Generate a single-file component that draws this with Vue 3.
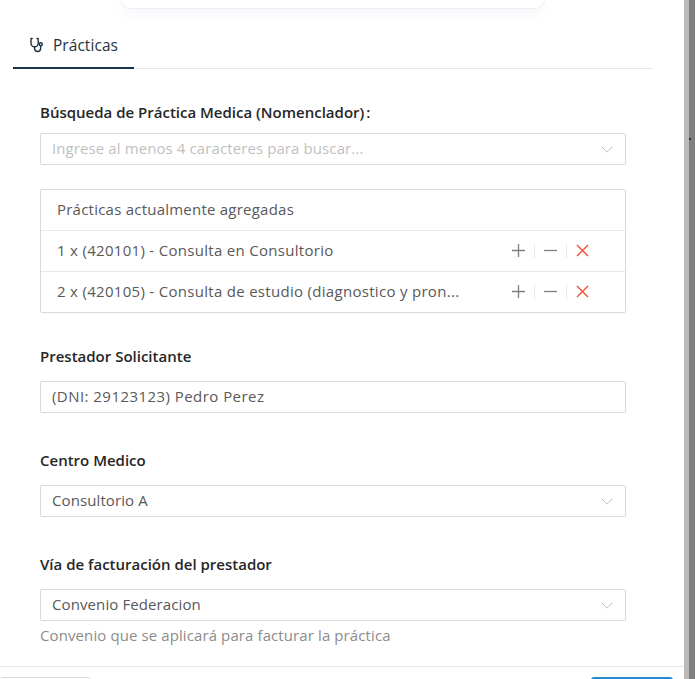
<template>
  <div class="screen">
    <div class="panel">
      <div class="scroll">
        <div class="top-card"></div>
        <div class="tabs">
          <div class="tab">
            <svg class="steth" viewBox="0 0 16 16" fill="none" stroke="#1c3345" stroke-width="1.4" stroke-linecap="round" stroke-linejoin="round">
              <path d="M3.2 1.5H2v4.7a3.6 3.6 0 0 0 7.2 0V1.5H8" />
              <path d="M5.6 9.8v1.7a3 3 0 0 0 6 0V9" />
              <circle cx="11.8" cy="7.2" r="1.5" />
            </svg>
            <span>Prácticas</span>
          </div>
        </div>
        <div class="form">
          <div class="field search">
            <label class="colon">Búsqueda de Práctica Medica (Nomenclador)<i>:</i></label>
            <div class="select placeholder">
              <span>Ingrese al menos 4 caracteres para buscar...</span>
              <svg class="chev" viewBox="0 0 12 7" fill="none" stroke="#bfbfbf" stroke-width="1"><path d="M.5.5 6 6.2 11.5.5" /></svg>
            </div>
          </div>

          <div class="list">
            <div class="list-head">Prácticas actualmente agregadas</div>
            <div class="list-row" v-for="item in items" :key="item.code">
              <span class="item-name">{{ item.text }}</span>
              <div class="actions">
                <svg class="act" viewBox="0 0 13 13" stroke="#7f7f7f" stroke-width="1.3"><path d="M6.5 0v13M0 6.5h13" /></svg>
                <i class="sep"></i>
                <svg class="act" viewBox="0 0 13 13" stroke="#7f7f7f" stroke-width="1.3"><path d="M0 6.5h13" /></svg>
                <i class="sep"></i>
                <svg class="act" viewBox="0 0 13 13" stroke="#f5563f" stroke-width="1.5"><path d="M1 1l11 11M12 1 1 12" /></svg>
              </div>
            </div>
          </div>

          <div class="field">
            <label>Prestador Solicitante</label>
            <div class="select"><span class="dni">(DNI: 29123123) Pedro Perez</span></div>
          </div>

          <div class="field">
            <label>Centro Medico</label>
            <div class="select">
              <span>Consultorio A</span>
              <svg class="chev" viewBox="0 0 12 7" fill="none" stroke="#bfbfbf" stroke-width="1"><path d="M.5.5 6 6.2 11.5.5" /></svg>
            </div>
          </div>

          <div class="field">
            <label>Vía de facturación del prestador</label>
            <div class="select">
              <span>Convenio Federacion</span>
              <svg class="chev" viewBox="0 0 12 7" fill="none" stroke="#bfbfbf" stroke-width="1"><path d="M.5.5 6 6.2 11.5.5" /></svg>
            </div>
            <div class="help">Convenio que se aplicará para facturar la práctica</div>
          </div>
        </div>
      </div>
      <div class="footer">
        <div class="btn-cancel"></div>
        <div class="btn-ok"></div>
      </div>
    </div>
    <div class="scrollbar"></div>
    <div class="backdrop"><i class="speck"></i></div>
  </div>
</template>

<script setup>
const items = [
  { code: "420101", text: "1 x (420101) - Consulta en Consultorio" },
  { code: "420105", text: "2 x (420105) - Consulta de estudio (diagnostico y pron..." },
]
</script>

<style>
html, body {
  margin: 0;
  background: #fff;
}
</style>

<style scoped>
.screen {
  display: flex;
  width: 695px;
  height: 679px;
  overflow: hidden;
  font-family: "Open Sans", "Lato", sans-serif;
  font-size: 15px;
  letter-spacing: 0.1px;
  color: #595959;
}

.panel {
  width: 684px;
  display: flex;
  flex-direction: column;
  background: #fff;
}

.scroll {
  flex: 1;
  min-height: 0;
  position: relative;
  overflow: hidden;
}

.top-card {
  width: 424px;
  height: 9px;
  margin-left: 121px;
  box-sizing: border-box;
  background: #fff;
  border: 1px solid #eef0f3;
  border-top: 0;
  border-radius: 0 0 10px 10px;
  box-shadow: 0 4px 12px rgba(30, 60, 110, 0.05);
}

.tabs {
  margin: 19px 31px 0 13px;
  height: 41px;
  box-sizing: border-box;
  border-bottom: 1px solid #e8e8e8;
}

.tab {
  width: 121px;
  height: 41px;
  box-sizing: border-box;
  border-bottom: 2px solid #1c3345;
  display: flex;
  align-items: center;
  justify-content: center;
  gap: 8px;
  padding-bottom: 5px;
  color: #1c3345;
  font-size: 15.4px;
}

.steth {
  width: 16px;
  height: 16px;
}

.form {
  padding: 33px 58px 0 40px;
}

.field {
  margin-bottom: 37px;
}

.field.search {
  margin-bottom: 24px;
}

label {
  display: block;
  height: 20px;
  line-height: 20px;
  margin-bottom: 15px;
  font-weight: 600;
  letter-spacing: 0;
  color: #262626;
}

.search label {
  margin-bottom: 11px;
}

.colon i {
  font-style: normal;
  margin-left: 2px;
}

.select {
  height: 32px;
  box-sizing: border-box;
  border: 1px solid #d9d9d9;
  border-radius: 2px;
  padding: 0 11px 2px;
  display: flex;
  align-items: center;
  justify-content: space-between;
}

.dni {
  letter-spacing: 0.45px;
}

.placeholder {
  color: #bfbfbf;
}

.chev {
  width: 12px;
  height: 7px;
  margin-right: 1px;
  margin-top: 2px;
}

.list {
  border: 1px solid #d9d9d9;
  border-radius: 2px;
  margin-bottom: 33px;
}

.list-head,
.list-row {
  box-sizing: border-box;
  padding: 0 16px 1px;
  display: flex;
  align-items: center;
}

.list-head {
  height: 40px;
  padding-bottom: 3px;
  letter-spacing: 0.23px;
}

.list-row {
  height: 41px;
  border-top: 1px solid #e8e8e8;
  justify-content: space-between;
}

.item-name {
  letter-spacing: 0.3px;
  margin-top: -2px;
}

.actions {
  display: flex;
  align-items: center;
  gap: 9px;
  margin-right: 20px;
}

.act {
  width: 13px;
  height: 13px;
}

.sep {
  width: 1px;
  height: 14px;
  background: #e8e8e8;
}

.help {
  margin-top: 3px;
  line-height: 22px;
  color: #8c8c8c;
}

.footer {
  height: 13px;
  flex: none;
  border-top: 1px solid #e8e8e8;
  box-sizing: border-box;
  display: flex;
  justify-content: space-between;
  padding: 10px 11px 0 0;
  overflow: hidden;
}

.btn-cancel {
  width: 91px;
  height: 32px;
  box-sizing: border-box;
  border: 1px solid #d9d9d9;
  border-radius: 3px;
}

.btn-ok {
  width: 82px;
  height: 32px;
  background: #2f86c9;
  border-radius: 3px;
}

.scrollbar {
  width: 5px;
  background: #b9b9b9;
}

.backdrop {
  flex: 1;
  background: #808080;
  position: relative;
}

.speck {
  position: absolute;
  left: 0;
  top: 138px;
  width: 2px;
  height: 2px;
  background: #1c3345;
}
</style>
